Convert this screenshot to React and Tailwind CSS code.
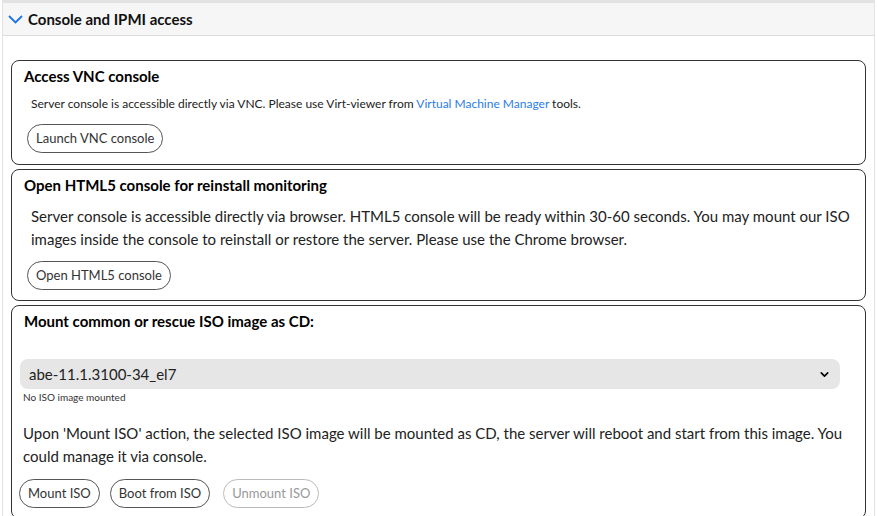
import { ChevronDown } from 'lucide-react';

function Pill({ children, disabled }) {
  return (
    <button
      className={
        disabled
          ? 'h-[29px] px-[8px] ml-[3px] rounded-full border border-[#bbb] text-[13px] text-[#999] bg-white'
          : 'h-[29px] px-[8px] rounded-full border border-[#555] text-[13px] text-[#333] bg-white'
      }
    >
      {children}
    </button>
  );
}

function Card({ title, pb = 'pb-[10px]', children }) {
  return (
    <div className={`border border-[#333] rounded-[8px] px-[12px] pt-[5px] ${pb}`}>
      <h3 className="text-[15px] font-bold text-black leading-[20px]">{title}</h3>
      {children}
    </div>
  );
}

export default function App() {
  return (
    <div className="w-[877px] h-[516px] overflow-hidden bg-white" style={{ fontFamily: 'Lato, "Noto Sans", sans-serif' }}>
      <div className="ml-[2px] w-[873px] border-x border-t-[3px] border-[#e2e2e2] h-[530px]">
        <div className="h-[33px] bg-[#f6f6f6] border-b border-[#dcdcdc] flex items-center px-[5px] gap-[5px]">
          <svg width="15" height="10" viewBox="0 0 15 10" fill="none" stroke="#1a73e8" strokeWidth="1.8">
            <path d="M1 2 L7.5 8.5 L14 2" />
          </svg>
          <span className="text-[15px] font-bold text-[#111]">Console and IPMI access</span>
        </div>

        <div className="px-[8px] pt-[24px] flex flex-col gap-[4px]">
          <Card title="Access VNC console" pb="pb-[11px]">
            <p className="text-[12px] text-[#222] mt-[10px] ml-[7px] leading-[16px]">
              Server console is accessible directly via VNC. Please use Virt-viewer from{' '}
              <span className="text-[#2b7de9]">Virtual Machine Manager</span> tools.
            </p>
            <div className="mt-[12px] ml-[3px]">
              <Pill>Launch VNC console</Pill>
            </div>
          </Card>

          <Card title="Open HTML5 console for reinstall monitoring">
            <p className="text-[15px] text-[#222] mt-[10px] ml-[7px] leading-[23px]">
              Server console is accessible directly via browser. HTML5 console will be ready within 30-60 seconds. You may mount our ISO images inside the console to reinstall or restore the server. Please use the Chrome browser.
            </p>
            <div className="mt-[10px] ml-[3px]">
              <Pill>Open HTML5 console</Pill>
            </div>
          </Card>

          <Card title="Mount common or rescue ISO image as CD:">
            <div className="mt-[28px] -ml-[4px] mr-[13px] h-[30px] rounded-[8px] bg-[#e6e6e6] flex items-center justify-between px-[9px]">
              <span className="text-[15px] text-[#222]">abe-11.1.3100-34_el7</span>
              <ChevronDown className="w-[13px] h-[13px] text-black" strokeWidth={3} />
            </div>
            <p className="text-[10px] text-[#333] mt-[1px] -ml-[1px]">No ISO image mounted</p>
            <p className="text-[15px] text-[#222] mt-[17px] -ml-[1px] leading-[23px]">
              Upon 'Mount ISO' action, the selected ISO image will be mounted as CD, the server will reboot and start from this image. You could manage it via console.
            </p>
            <div className="mt-[11px] -ml-[5px] flex gap-[10px]">
              <Pill>Mount ISO</Pill>
              <Pill>Boot from ISO</Pill>
              <Pill disabled>Unmount ISO</Pill>
            </div>
          </Card>
        </div>
      </div>
    </div>
  );
}
